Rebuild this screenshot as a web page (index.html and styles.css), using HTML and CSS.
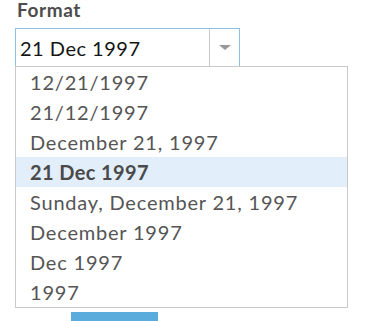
FILE: index.html
```html
<!DOCTYPE html>
<html lang="en">
<head>
    <meta charset="UTF-8">
    <meta name="viewport" content="width=device-width, initial-scale=1.0">
    <title>Date format</title>
    <link rel="stylesheet" href="styles.css">
</head>
<body>
    <div class="field">
        <label class="field-label">Format</label>
        <div class="select">
            <span class="select-value">21 Dec 1997</span>
            <span class="select-arrow"></span>
        </div>
        <ul class="options">
            <li>12/21/1997</li>
            <li>21/12/1997</li>
            <li>December 21, 1997</li>
            <li class="selected">21 Dec 1997</li>
            <li>Sunday, December 21, 1997</li>
            <li>December 1997</li>
            <li>Dec 1997</li>
            <li>1997</li>
        </ul>
        <div class="actions">
            <button class="btn-primary"></button>
        </div>
    </div>
</body>
</html>
```

FILE: styles.css
```css
body {
    margin: 0;
    font-family: Lato, "Open Sans", sans-serif;
    background: #fff;
}
.field {
    padding-left: 15px;
}
.field-label {
    display: block;
    padding-left: 2px;
    height: 28px;
    font-size: 19px;
    font-weight: bold;
    letter-spacing: 0.6px;
    color: #4c4c4c;
    line-height: 19px;
}
.select {
    box-sizing: border-box;
    width: 225px;
    height: 38px;
    border: 1px solid #8cc1e3;
    border-bottom: none;
    display: flex;
    align-items: center;
}
.select-value {
    flex: 1;
    padding-left: 4px;
    font-size: 20px;
    letter-spacing: 0.5px;
    color: #151515;
}
.select-arrow {
    width: 29px;
    height: 100%;
    border-left: 1px solid #cacaca;
    display: flex;
    align-items: center;
    justify-content: center;
}
.select-arrow::after {
    content: "";
    border-left: 6px solid transparent;
    border-right: 6px solid transparent;
    border-top: 5px solid #999;
}
.options {
    list-style: none;
    margin: 0;
    padding: 0;
    box-sizing: border-box;
    width: 333px;
    border: 1px solid #cacaca;
}
.options li {
    height: 30px;
    line-height: 30px;
    padding-left: 14px;
    font-size: 20px;
    letter-spacing: 0.8px;
    color: #555;
}
.options .selected {
    background: #e2eef9;
    font-weight: bold;
    letter-spacing: 0.4px;
    color: #4a4a4a;
}
.actions {
    padding-top: 4px;
    padding-left: 56px;
}
.btn-primary {
    display: block;
    width: 87px;
    height: 10px;
    border: none;
    background: #5aacdc;
}
```
